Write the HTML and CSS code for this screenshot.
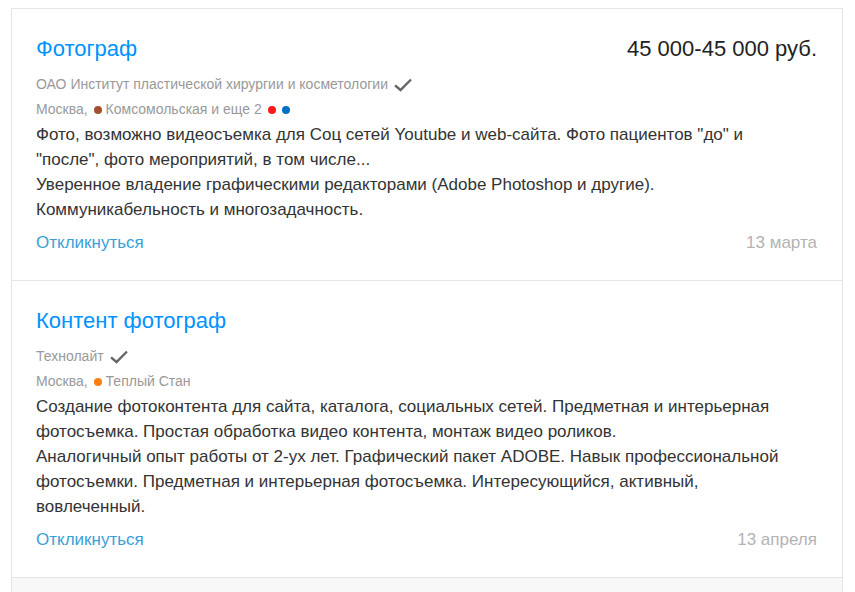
FILE: index.html
```html
<!DOCTYPE html>
<html lang="ru">
<head>
<meta charset="utf-8">
<meta name="viewport" content="width=device-width, initial-scale=1">
<title>Вакансии</title>
<link rel="stylesheet" href="styles.css">
</head>
<body>
<main class="list">
  <article class="card">
    <header class="head">
      <h2 class="title"><a href="#">Фотограф</a></h2>
      <div class="salary">45 000-45 000 руб.</div>
    </header>
    <div class="meta">
      <a class="company" href="#">ОАО Институт пластической хирургии и косметологии</a>
      <svg class="check" viewBox="0 0 18 14" aria-hidden="true"><path d="M1 7.300L6.500 12L17 1.500"/></svg>
    </div>
    <div class="meta">Москва, <span class="dot brown"></span>Комсомольская и еще 2 <span class="dot red"></span><span class="dot blue"></span></div>
    <p class="text">Фото, возможно видеосъемка для Соц сетей Youtube и web-сайта. Фото пациентов "до" и "после", фото мероприятий, в том числе...</p>
    <p class="text">Уверенное владение графическими редакторами (Adobe Photoshop и другие). Коммуникабельность и многозадачность.</p>
    <footer class="foot">
      <a class="reply" href="#">Откликнуться</a>
      <time class="date">13 марта</time>
    </footer>
  </article>
  <article class="card">
    <header class="head">
      <h2 class="title"><a href="#">Контент фотограф</a></h2>
    </header>
    <div class="meta">
      <a class="company" href="#">Технолайт</a>
      <svg class="check" viewBox="0 0 18 14" aria-hidden="true"><path d="M1 7.300L6.500 12L17 1.500"/></svg>
    </div>
    <div class="meta">Москва, <span class="dot orange"></span>Теплый Стан</div>
    <p class="text">Создание фотоконтента для сайта, каталога, социальных сетей. Предметная и интерьерная фотосъемка. Простая обработка видео контента, монтаж видео роликов.</p>
    <p class="text">Аналогичный опыт работы от 2-ух лет. Графический пакет ADOBE. Навык профессиональной фотосъемки. Предметная и интерьерная фотосъемка. Интересующийся, активный, вовлеченный.</p>
    <footer class="foot">
      <a class="reply" href="#">Откликнуться</a>
      <time class="date">13 апреля</time>
    </footer>
  </article>
  <div class="next"></div>
</main>
</body>
</html>
```
FILE: styles.css
```css
* { box-sizing: border-box; }
body {
  display: flex;
  flex-direction: column;
  min-height: 100vh;
  margin: 0;
  padding: 8px 12px 0 11px;
  background: #fff;
  color: #333;
  font-family: "Liberation Sans", Arial, sans-serif;
  font-size: 17px;
}
a { color: inherit; text-decoration: none; }
.list {
  display: flex;
  flex-direction: column;
  flex: 1;
  border: 1px solid #e4e4e4;
  border-bottom: 0;
}
.card {
  padding: 24px 25px 25px 24px;
  border-bottom: 1px solid #e4e4e4;
}
.head {
  display: flex;
  justify-content: space-between;
  line-height: 32px;
  margin-bottom: 7px;
}
.title { margin: 0; font-size: 22px; font-weight: 400; color: #0093ff; }
.salary { font-size: 22px; color: #222; }
.meta {
  display: flex;
  align-items: center;
  white-space: pre;
  font-size: 14px;
  line-height: 25px;
  color: #999;
}
.check {
  width: 18px;
  height: 14px;
  margin-left: 6px;
  fill: none;
  stroke: #666;
  stroke-width: 2.4;
}
.dot { width: 8px; height: 8px; margin: 0 4px 0 2px; border-radius: 50%; }
.brown { background: #a0522d; }
.red { background: #ff1a1a; }
.blue { background: #0072c6; }
.orange { background: #ff7f0e; }
.text { margin: 0; max-width: 750px; line-height: 25px; }
.foot {
  display: flex;
  justify-content: space-between;
  margin-top: 9px;
  line-height: 24px;
}
.reply { color: #3a9fd6; }
.date { color: #b3b3b3; }
.next { flex: 1; background: #f8f8f8; }
```
